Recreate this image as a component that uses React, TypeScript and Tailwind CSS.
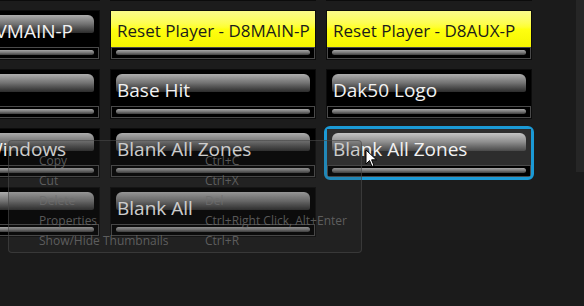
import React from "react";

type TileKind = "dark" | "yellow" | "selected" | "empty";

interface TileData {
    label: string;
    kind: TileKind;
}

const rows: TileData[][] = [
    [
        { label: "", kind: "dark" },
        { label: "", kind: "dark" },
        { label: "", kind: "dark" },
    ],
    [
        { label: "Reset  - D8VMAIN-P", kind: "dark" },
        { label: "Reset Player - D8MAIN-P", kind: "yellow" },
        { label: "Reset Player - D8AUX-P", kind: "yellow" },
    ],
    [
        { label: "Stop All", kind: "dark" },
        { label: "Base Hit", kind: "dark" },
        { label: "Dak50 Logo", kind: "dark" },
    ],
    [
        { label: "Close All  Windows", kind: "dark" },
        { label: "Blank All Zones", kind: "dark" },
        { label: "Blank All Zones", kind: "selected" },
    ],
    [
        { label: "Clear", kind: "dark" },
        { label: "Blank All", kind: "dark" },
        { label: "", kind: "empty" },
    ],
];

const menuItems = [
    { label: "Copy", keys: "Ctrl+C" },
    { label: "Cut", keys: "Ctrl+X" },
    { label: "Delete", keys: "Del" },
    { label: "Properties", keys: "Ctrl+Right Click, Alt+Enter" },
    { label: "Show/Hide Thumbnails", keys: "Ctrl+R" },
];

function Tile({ tile }: { tile: TileData }) {
    if (tile.kind === "empty") {
        return <div className="w-[204px] h-[48px]" />;
    }

    const isYellow = tile.kind === "yellow";
    const isSelected = tile.kind === "selected";

    return (
        <div
            className={
                "w-[204px] h-[48px] flex flex-col shadow-[0_0_0_1px_#0c0c0c] " +
                (isSelected ? "outline-[3px] outline-[#1b9ad6] rounded-[3px]" : "")
            }
        >
            {isYellow ? (
                <div className="h-[37px] bg-gradient-to-b from-[#fafa8a] via-[#ffff10] to-[#f4f400] pl-[6px] pt-[11px] text-[17px] leading-[17px] text-[#1c1c1c] whitespace-nowrap overflow-hidden">
                    {tile.label}
                </div>
            ) : (
                <div
                    className={
                        "relative h-[36px] pl-[6px] pt-[11px] text-[19px] leading-[19px] text-[#f2f2f2] whitespace-pre " +
                        (isSelected ? "bg-[#2d2d2d]" : "bg-black")
                    }
                >
                    {/* glossy cap behind the label */}
                    <div
                        className={
                            "absolute left-[5px] right-[5px] top-[4px] h-[18px] rounded-t-[6px] rounded-b-[2px] bg-gradient-to-b " +
                            (isSelected
                                ? "from-[#c4c4c4] via-[#8e8e8e] to-[#4a4a4a]"
                                : "from-[#adadad] via-[#727272] to-[#2c2c2c]")
                        }
                    />
                    <span className="relative">{tile.label}</span>
                </div>
            )}
            <div className="h-[12px] border border-[#4a4a4a] bg-black px-[4px] pt-[2px]">
                <div className="h-[5px] rounded-full bg-gradient-to-b from-[#a6a6a6] via-[#7a7a7a] to-[#3f3f3f]" />
            </div>
        </div>
    );
}

export default function App() {
    return (
        <div className="relative w-[584px] h-[306px] overflow-hidden bg-[#1b1b1b] font-['Open_Sans',sans-serif]">
            <div className="flex">
                <div className="w-[540px] h-[240px] overflow-hidden bg-[#1c1c1c]">
                    <div className="-ml-[105px] -mt-[48px] flex flex-col gap-[11px]">
                        {rows.map((row, r) => (
                            <div key={r} className="flex gap-[12px]">
                                {row.map((tile, c) => (
                                    <Tile key={c} tile={tile} />
                                ))}
                            </div>
                        ))}
                    </div>
                </div>
                <div className="flex-1 flex justify-end">
                    <div className="w-[8px] h-[172px] bg-[#262626]" />
                </div>
            </div>

            {/* faded context menu */}
            <div className="absolute left-[8px] top-[140px] w-[354px] h-[113px] rounded-[4px] border border-[#4a4a4a]/60 bg-[#3a3a3a]/20 pt-[10px] text-[12px] leading-[20px] text-[#6e6e6e]/80">
                {menuItems.map((item) => (
                    <div key={item.label} className="flex">
                        <span className="w-[196px] pl-[30px]">{item.label}</span>
                        <span>{item.keys}</span>
                    </div>
                ))}
            </div>

            {/* mouse pointer */}
            <svg className="absolute left-[365px] top-[149px]" width="13" height="19" viewBox="0 0 13 19">
                <path d="M1 1 L1 15 L4.5 11.5 L7 17.5 L9 16.6 L6.6 10.8 L11.5 10.8 Z" fill="#fff" stroke="#000" strokeWidth="1" />
            </svg>
        </div>
    );
}
